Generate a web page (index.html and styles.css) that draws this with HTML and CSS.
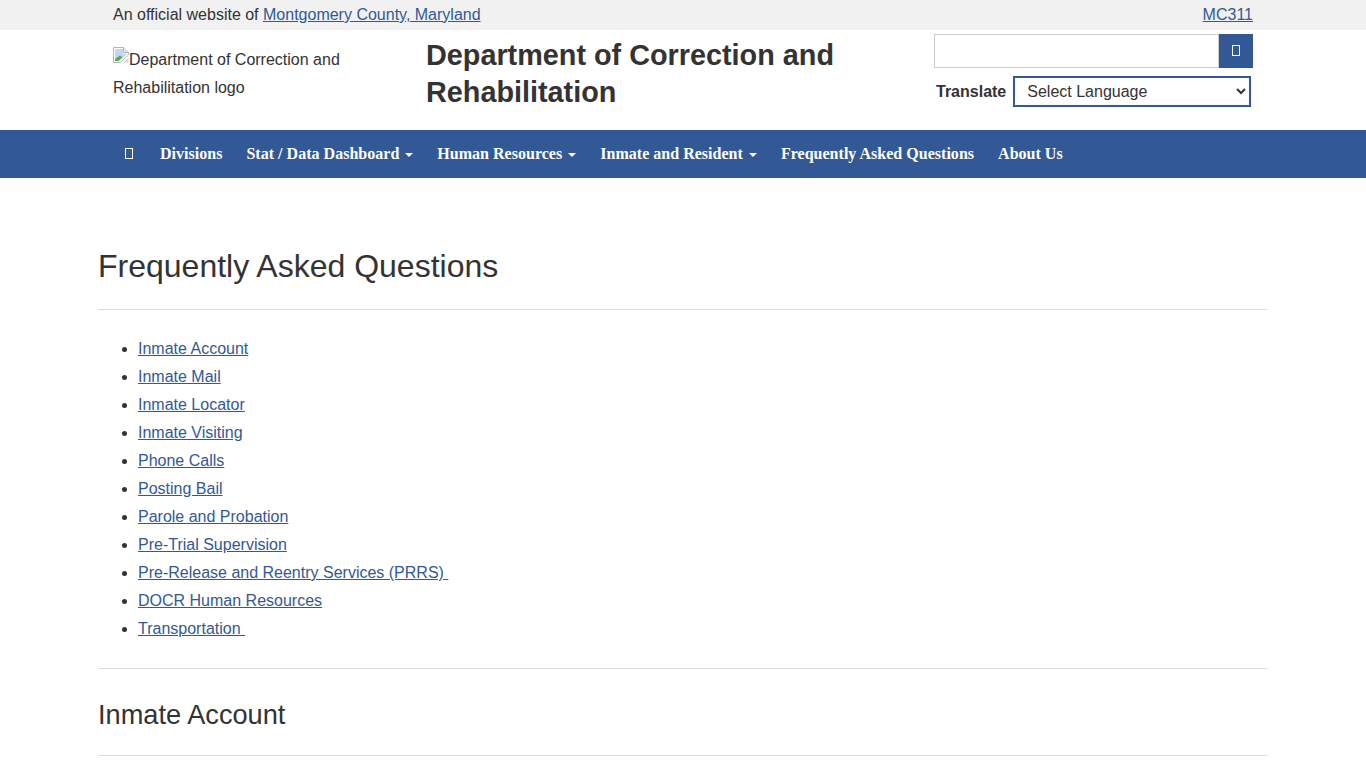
FILE: index.html
```html
<!DOCTYPE html>
<html lang="en">

<head>
    <meta charset="UTF-8">
    <meta name="viewport" content="width=device-width, initial-scale=1.0">
    <title>Frequently Asked Questions</title>
    <link rel="stylesheet" href="styles.css">
</head>

<body>
    <div class="topbar">
        <div class="wrap topbar-row">
            <span>An official website of <a href="#">Montgomery County, Maryland</a></span>
            <a href="#">MC311</a>
        </div>
    </div>

    <div class="wrap header">
        <div class="logo">
            <svg class="broken-img" width="16" height="16" viewBox="0 0 16 16">
                <path d="M0.5 0.5H10.5L15.5 5.5V8L7 15.5H0.5Z" fill="#fff" stroke="#b4b4b4" />
                <path d="M10.5 0.5V5.5H15.5" fill="#e8e8e8" stroke="#b4b4b4" />
                <path d="M2 2H10V6.5H14V7.5L6 14H2Z" fill="#c3d5f2" />
                <path d="M2 14V12L7 8.5L9.5 10L5.5 14Z" fill="#5aa84f" />
                <path d="M15.5 10.5V15.5H10Z" fill="#d8d8d8" />
            </svg>Department of Correction and Rehabilitation logo
        </div>
        <h1 class="site-title">Department of Correction and Rehabilitation</h1>
        <div class="tools">
            <div class="search">
                <input type="text" class="search-input">
                <button class="search-btn"><span class="no-glyph"></span></button>
            </div>
            <div class="translate">
                <label for="lang">Translate</label>
                <select id="lang">
                    <option>Select Language</option>
                </select>
            </div>
        </div>
    </div>

    <div class="navbar">
        <ul class="wrap nav">
            <li><a href="#" class="home-link"><span class="no-glyph"></span></a></li>
            <li><a href="#">Divisions</a></li>
            <li><a href="#">Stat / Data Dashboard <b class="caret"></b></a></li>
            <li><a href="#">Human Resources <b class="caret"></b></a></li>
            <li><a href="#">Inmate and Resident <b class="caret"></b></a></li>
            <li><a href="#">Frequently Asked Questions</a></li>
            <li><a href="#">About Us</a></li>
        </ul>
    </div>

    <div class="content">
        <h2 class="page-title">Frequently Asked Questions</h2>
        <hr>
        <ul class="faq-list">
            <li><a href="#">Inmate Account</a></li>
            <li><a href="#">Inmate Mail</a></li>
            <li><a href="#">Inmate Locator</a></li>
            <li><a href="#">Inmate Visiting</a></li>
            <li><a href="#">Phone Calls</a></li>
            <li><a href="#">Posting Bail</a></li>
            <li><a href="#">Parole and Probation</a></li>
            <li><a href="#">Pre-Trial Supervision</a></li>
            <li><a href="#">Pre-Release and Reentry Services (PRRS)&nbsp;</a></li>
            <li><a href="#">DOCR Human Resources</a></li>
            <li><a href="#">Transportation&nbsp;</a></li>
        </ul>
        <hr>
        <h3 class="section-title">Inmate Account</h3>
        <hr>
    </div>
</body>

</html>
```

FILE: styles.css
```css
* {
    box-sizing: border-box;
}

html {
    overflow: hidden;
}

body {
    margin: 0;
    font-family: "Liberation Sans", Arial, sans-serif;
    font-size: 16px;
    line-height: 28px;
    color: #333;
    background: #fff;
}

a {
    color: #325996;
    text-decoration: underline;
}

.wrap {
    width: 1140px;
    margin: 0 auto;
}

.topbar {
    height: 30px;
    padding-top: 1px;
    background: #f1f1f1;
}

.topbar-row {
    display: flex;
    justify-content: space-between;
}

.header {
    height: 100px;
    display: flex;
}

.logo {
    width: 313px;
    padding: 16px 30px 0 0;
}

.broken-img {
    vertical-align: 2px;
}

.site-title {
    width: 508px;
    margin: 7px 0 0;
    font-size: 28.8px;
    line-height: 37px;
    font-weight: bold;
}

.tools {
    flex: 1;
    padding-top: 4px;
}

.search {
    display: flex;
    height: 34px;
}

.search-input {
    flex: 1;
    border: 1px solid #ccc;
    outline: none;
}

.search-btn {
    width: 34px;
    border: 0;
    padding: 0;
    background: #325996;
}

.no-glyph {
    display: inline-block;
    width: 8px;
    height: 11px;
    border: 1px solid #fff;
}

.translate {
    display: flex;
    align-items: center;
    margin-top: 8px;
}

.translate label {
    margin: 0 7px 0 2px;
    font-weight: bold;
}

.translate select {
    width: 238px;
    height: 31px;
    padding-left: 8px;
    font-family: inherit;
    font-size: 16px;
    color: #333;
    background: #fff;
    border: 2px solid #325996;
    border-radius: 0;
}

.navbar {
    height: 48px;
    background: #325996;
}

.nav {
    display: flex;
    list-style: none;
    padding: 0;
}

.nav a {
    display: block;
    padding: 10px 12px;
    font-family: "Liberation Serif", "Times New Roman", serif;
    font-weight: bold;
    font-size: 16px;
    letter-spacing: 0.02px;
    color: #fff;
    text-decoration: none;
}

.nav .home-link {
    padding-right: 15px;
}

.caret {
    display: inline-block;
    margin-left: 2px;
    vertical-align: middle;
    border-top: 4px solid #fff;
    border-left: 4px solid transparent;
    border-right: 4px solid transparent;
}

.content {
    width: 1170px;
    margin: 0 auto;
}

.page-title {
    margin: 70px 0 0;
    font-size: 32px;
    line-height: 36px;
    font-weight: normal;
}

.section-title {
    margin: 31px 0 0;
    font-size: 27.2px;
    line-height: 30px;
    font-weight: normal;
}

hr {
    margin: 25px 0 0;
    border: 0;
    border-top: 1px solid #ddd;
}

.faq-list {
    margin: 25px 0 0;
    padding-left: 40px;
}
```
